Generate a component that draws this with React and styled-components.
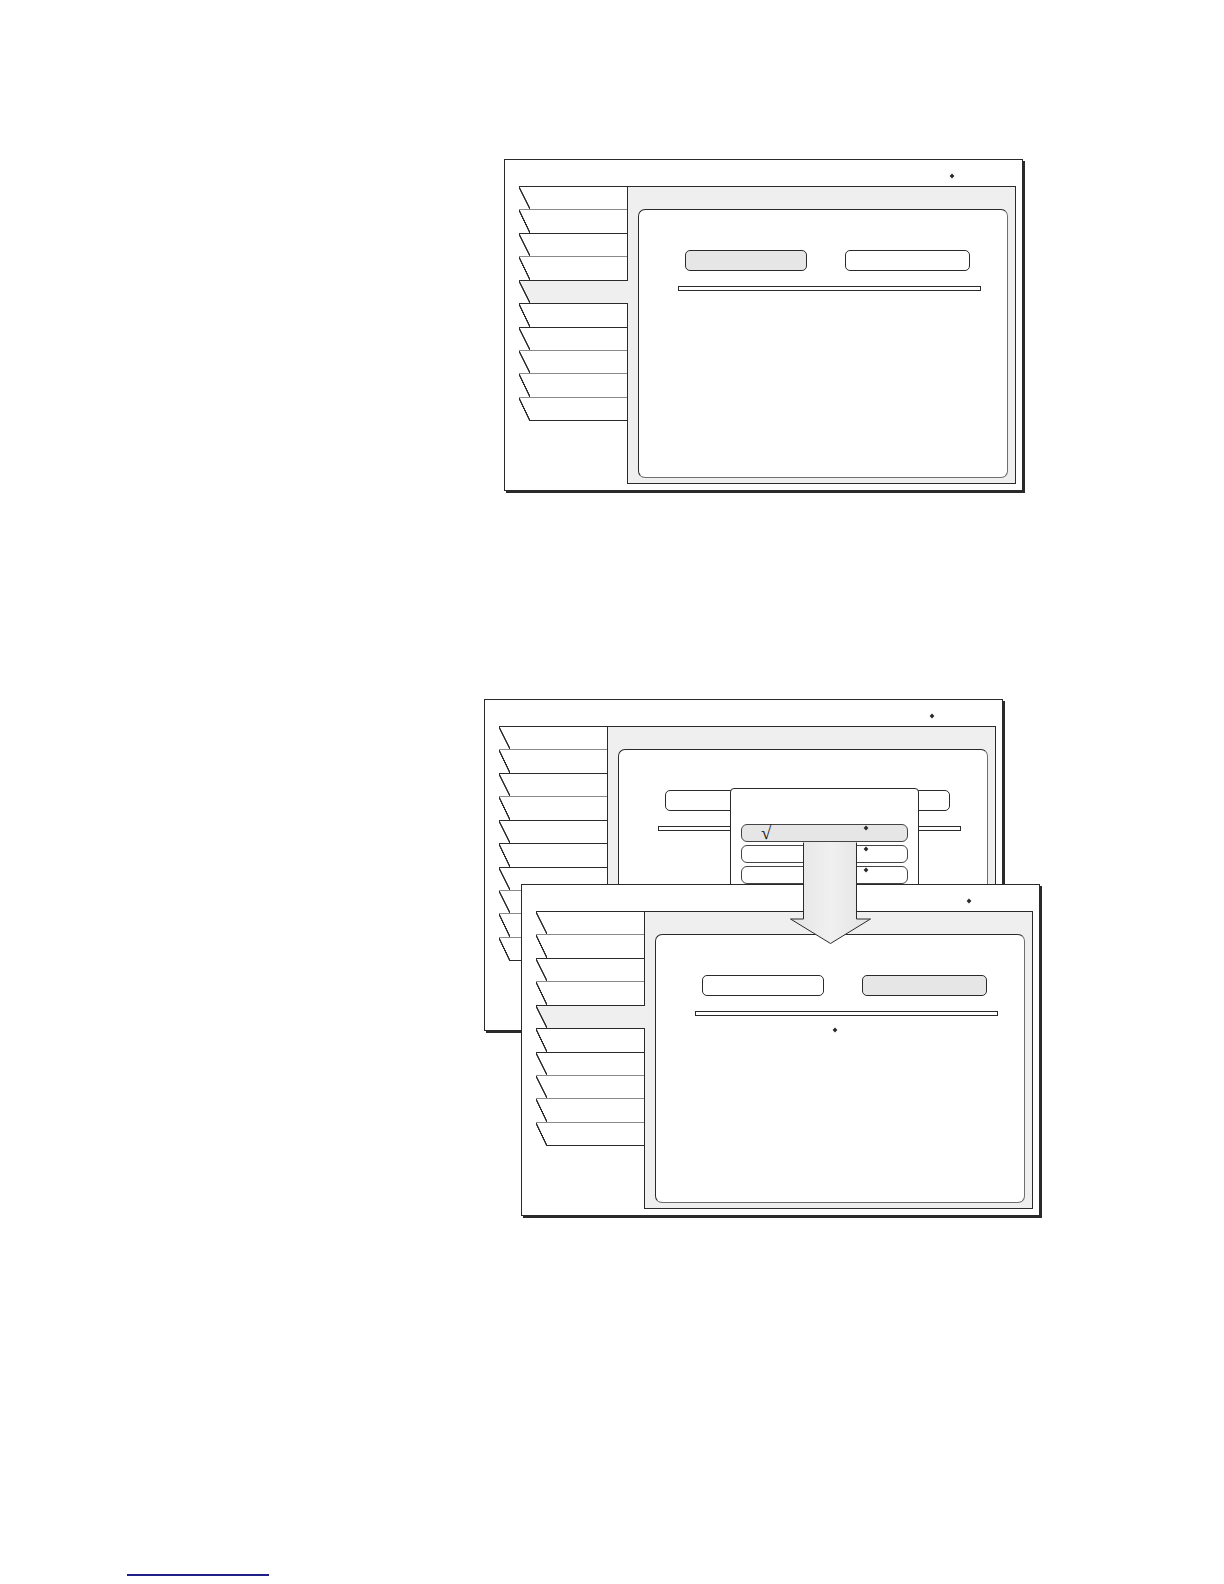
import React from "react";
import styled, { createGlobalStyle } from "styled-components";

const INK = "#2a2a2a";
const SOFT = "#6e6e6e";
const FILL = "#efefef";

const Global = createGlobalStyle`
  html, body { margin: 0; padding: 0; background: #fff; }
  body { font-family: "Liberation Sans", Arial, sans-serif; }
`;

const Page = styled.div`
  width: 1224px;
  min-height: 1584px;
  box-sizing: border-box;
  padding-top: 159px;
  display: flex;
  flex-direction: column;
  align-items: flex-start;
  background: #fff;
`;

const FigureOne = styled.div`
  margin-left: 504px;
`;

const FigureTwo = styled.div`
  position: relative;
  margin-left: 484px;
  margin-top: 208px;
  width: 560px;
  height: 519px;
`;

const Layer = styled.div`
  position: absolute;
  left: ${(p) => p.$x}px;
  top: ${(p) => p.$y}px;
  z-index: ${(p) => p.$z};
`;

const ScreenFrame = styled.div`
  width: 519px;
  height: 332px;
  box-sizing: border-box;
  border: 1px solid ${INK};
  box-shadow: 2px 2px 0 ${INK};
  background: #fff;
  display: flex;
  flex-direction: column;
`;

const Header = styled.div`
  height: 26px;
  flex-shrink: 0;
  box-sizing: border-box;
  display: flex;
  justify-content: flex-end;
  align-items: flex-start;
  padding: 14px 68px 0 0;
`;

const Dot = styled.span`
  display: block;
  width: 4px;
  height: 4px;
  background: ${INK};
  transform: rotate(45deg) scale(0.85);
  flex-shrink: 0;
`;

const Body = styled.div`
  flex: 1;
  display: flex;
  padding: 0 6px 6px 14px;
  min-height: 0;
`;

const TabColumn = styled.div`
  width: 108px;
  flex-shrink: 0;
  display: flex;
  flex-direction: column;
`;

const Tab = styled.div`
  height: ${(p) => p.$h}px;
  box-sizing: border-box;
  border-top: 1px solid ${(p) => p.$tone};
  background:
    ${(p) =>
      p.$last
        ? `linear-gradient(${INK}, ${INK}) 10px 100% / 100% 1px no-repeat,`
        : ""}
    linear-gradient(
        to top right,
        #fff calc(50% - 0.9px),
        ${INK} calc(50% - 0.5px),
        ${INK} calc(50% + 0.5px),
        ${(p) => (p.$selected ? FILL : "#fff")} calc(50% + 0.9px)
      )
      0 0 / 11px 100% no-repeat,
    linear-gradient(
        ${(p) => (p.$selected ? FILL : "#fff")},
        ${(p) => (p.$selected ? FILL : "#fff")}
      )
      10px 0 / 100% 100% no-repeat;
  ${(p) =>
    p.$selected &&
    `margin-right: -1px; position: relative; z-index: 1;`}
`;

const Panel = styled.div`
  flex: 1;
  display: flex;
  background: ${FILL};
  border: 1px solid ${INK};
  padding: 22px 7px 5px 10px;
`;

const InnerBox = styled.div`
  flex: 1;
  display: flex;
  flex-direction: column;
  align-items: flex-start;
  background: #fff;
  border: 1px solid ${INK};
  border-right-color: ${SOFT};
  border-bottom-color: ${SOFT};
  border-radius: 7px;
  padding-top: 40px;
`;

const ButtonRow = styled.div`
  display: flex;
  gap: 38px;
  padding-left: 46px;
`;

const Button = styled.div`
  width: ${(p) => p.$w}px;
  height: 21px;
  box-sizing: border-box;
  border: 1px solid ${INK};
  border-radius: 5px;
  background: ${(p) => (p.$active ? "#e6e6e6" : "#fff")};
`;

const Bar = styled.div`
  width: 303px;
  height: 5px;
  box-sizing: border-box;
  margin: 15px 0 0 39px;
  border: 1px solid ${INK};
  background: #fff;
`;

const NoteDot = styled(Dot)`
  margin: 12px 0 0 177px;
`;

const Menu = styled.div`
  width: 189px;
  height: 112px;
  box-sizing: border-box;
  background: #fff;
  border: 1px solid ${INK};
  border-radius: 4px;
  padding: 35px 10px 0 10px;
  display: flex;
  flex-direction: column;
  gap: 3px;
`;

const MenuItem = styled.div`
  height: 18px;
  box-sizing: border-box;
  border: 1px solid #444;
  border-radius: 6px;
  background: ${(p) => (p.$checked ? "#e6e6e6" : "#fff")};
  display: flex;
  align-items: flex-start;
  padding-left: 19px;
`;

const CheckSlot = styled.span`
  width: 103px;
  height: 16px;
  flex-shrink: 0;
  font-family: "Liberation Serif", "DejaVu Serif", serif;
  font-style: italic;
  font-size: 19px;
  line-height: 16px;
  color: #111;
`;

const MenuDot = styled(Dot)`
  margin-top: 1px;
`;

const Footer = styled.div`
  margin: 356px 0 0 127px;
  width: 142px;
  height: 0;
  border-top: 2px solid #1f1f8a;
`;

const TAB_TONES = [INK, "#8a8a8a", INK, "#8a8a8a", INK, INK, INK, "#8a8a8a", "#8a8a8a", "#8a8a8a"];
const TAB_HEIGHTS = [23, 24, 23, 24, 23, 24, 23, 23, 24, 24];

function Screen({ selectedTab, activeButton, noteDot }) {
  return (
    <ScreenFrame>
      <Header>
        <Dot />
      </Header>
      <Body>
        <TabColumn>
          {TAB_HEIGHTS.map((h, i) => (
            <Tab
              key={i}
              $h={h}
              $tone={TAB_TONES[i]}
              $selected={selectedTab === i}
              $last={i === TAB_HEIGHTS.length - 1}
            />
          ))}
        </TabColumn>
        <Panel>
          <InnerBox>
            <ButtonRow>
              <Button $w={122} $active={activeButton === 0} />
              <Button $w={125} $active={activeButton === 1} />
            </ButtonRow>
            <Bar />
            {noteDot && <NoteDot />}
          </InnerBox>
        </Panel>
      </Body>
    </ScreenFrame>
  );
}

function DownArrow() {
  return (
    <svg width="82" height="104" viewBox="0 0 82 104">
      <defs>
        <linearGradient id="shaft" x1="0" x2="1" y1="0" y2="0">
          <stop offset="0" stopColor="#e4e4e4" />
          <stop offset="0.5" stopColor="#f0f0f0" />
          <stop offset="1" stopColor="#e2e2e2" />
        </linearGradient>
      </defs>
      <polygon
        points="14,0 66,0 66,77 80.5,77 40.5,101.5 0.5,77 14,77"
        fill="url(#shaft)"
      />
      <path
        d="M13.5,0.5 V77 H0.5 L40.5,101.5 L80.5,77 H66.5 V0.5"
        fill="none"
        stroke={INK}
        strokeWidth="1"
      />
    </svg>
  );
}

export default function App() {
  return (
    <>
      <Global />
      <Page>
        <FigureOne>
          <Screen selectedTab={4} activeButton={0} />
        </FigureOne>
        <FigureTwo>
          <Layer $x={0} $y={0} $z={1}>
            <Screen selectedTab={null} activeButton={null} />
          </Layer>
          <Layer $x={246} $y={89} $z={2}>
            <Menu>
              <MenuItem $checked>
                <CheckSlot>√</CheckSlot>
                <MenuDot />
              </MenuItem>
              <MenuItem>
                <CheckSlot />
                <MenuDot />
              </MenuItem>
              <MenuItem>
                <CheckSlot />
                <MenuDot />
              </MenuItem>
            </Menu>
          </Layer>
          <Layer $x={37} $y={185} $z={3}>
            <Screen selectedTab={4} activeButton={1} noteDot />
          </Layer>
          <Layer $x={306} $y={143} $z={4}>
            <DownArrow />
          </Layer>
        </FigureTwo>
        <Footer />
      </Page>
    </>
  );
}
